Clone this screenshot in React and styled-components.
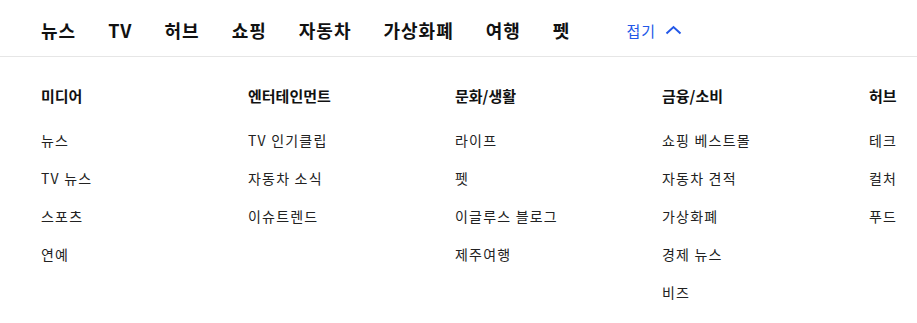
import React from "react";
import styled, { createGlobalStyle } from "styled-components";

const Global = createGlobalStyle`
  html, body { margin: 0; padding: 0; background: #fff; }
  body { font-family: "Noto Sans CJK KR", "Noto Sans", sans-serif; color: #111; }
`;

const Page = styled.div`
  width: 917px;
  overflow: hidden;
`;

const Nav = styled.nav`
  height: 57px;
  border-bottom: 1px solid #e6e6e6;
  display: flex;
  align-items: center;
  padding: 4px 0 0 41px;
  gap: 32px;
  box-sizing: border-box;
`;

const NavItem = styled.a`
  font-size: 18px;
  font-weight: 700;
  letter-spacing: 1px;
  color: #111;
  text-decoration: none;
  line-height: 1;
  white-space: nowrap;
`;

const Fold = styled.button`
  margin-left: 24px;
  border: 0;
  background: none;
  padding: 0;
  display: flex;
  align-items: center;
  gap: 9px;
  color: #2358e8;
  font-family: inherit;
  font-size: 15px;
  letter-spacing: 1px;
  line-height: 1;
`;

const Menu = styled.div`
  display: grid;
  grid-template-columns: repeat(5, 207px);
  padding: 28px 0 0 41px;
`;

const Column = styled.div`
  display: flex;
  flex-direction: column;
`;

const Heading = styled.h3`
  margin: 0 0 23px;
  font-size: 15px;
  font-weight: 700;
  line-height: 22px;
  white-space: nowrap;
`;

const Link = styled.a`
  font-size: 14px;
  letter-spacing: 1.2px;
  color: #222;
  line-height: 20px;
  height: 38px;
  white-space: nowrap;
`;

const navItems = ["뉴스", "TV", "허브", "쇼핑", "자동차", "가상화폐", "여행", "펫"];

const columns = [
  { title: "미디어", items: ["뉴스", "TV 뉴스", "스포츠", "연예"] },
  { title: "엔터테인먼트", items: ["TV 인기클립", "자동차 소식", "이슈트렌드"] },
  { title: "문화/생활", items: ["라이프", "펫", "이글루스 블로그", "제주여행"] },
  { title: "금융/소비", items: ["쇼핑 베스트몰", "자동차 견적", "가상화폐", "경제 뉴스", "비즈"] },
  { title: "허브", items: ["테크", "컬처", "푸드"] },
];

export default function App() {
  return (
    <Page>
      <Global />
      <Nav>
        {navItems.map((n) => (
          <NavItem key={n}>{n}</NavItem>
        ))}
        <Fold>
          접기
          <svg width="17" height="10" viewBox="0 0 17 10" fill="none">
            <path d="M1.5 8.5 L8.5 2 L15.5 8.5" stroke="#2358e8" strokeWidth="2" />
          </svg>
        </Fold>
      </Nav>
      <Menu>
        {columns.map((c) => (
          <Column key={c.title}>
            <Heading>{c.title}</Heading>
            {c.items.map((i) => (
              <Link key={i}>{i}</Link>
            ))}
          </Column>
        ))}
      </Menu>
    </Page>
  );
}
